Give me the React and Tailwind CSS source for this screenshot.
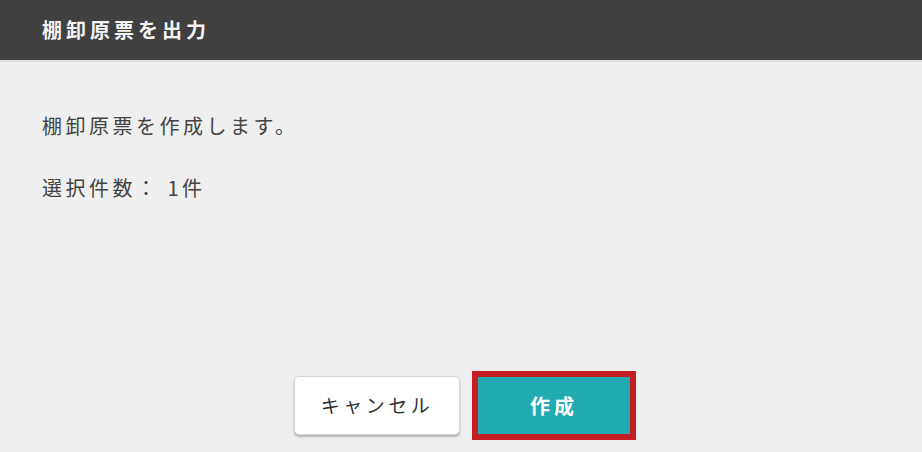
export default function App() {
  const font = { fontFamily: '"Noto Sans CJK JP", "Noto Sans", sans-serif' };
  return (
    <div style={font} className="w-[922px] h-[452px] bg-[#efefef] flex flex-col overflow-hidden">
      {/* Header */}
      <div className="h-[62px] bg-[#404040] flex items-center px-[42px] border-b-2 border-[#dcdcdc]">
        <h1 className="text-[20px] font-bold text-[#f4f4f4] tracking-[4px]">棚卸原票を出力</h1>
      </div>

      {/* Body */}
      <div className="flex-1 px-[42px] pt-[50px] text-[#444] text-[20px] tracking-[3.5px]">
        <p className="leading-[28px]">棚卸原票を作成します。</p>
        <p className="leading-[28px] mt-[34px]">選択件数： 1件</p>
      </div>

      {/* Footer */}
      <div className="flex justify-center items-center gap-[12px] pb-[12px] pl-[8px]">
        <button className="w-[166px] h-[59px] bg-white rounded-[5px] border border-[#d4d4d4] shadow-[0_2px_2px_rgba(0,0,0,0.25)] text-[19px] text-[#333] tracking-[3.5px]">
          キャンセル
        </button>
        <div className="border-[6px] border-[#c41e24]">
          <button className="w-[152px] h-[57px] bg-[#21aab0] text-white text-[20px] font-bold tracking-[4px]">
            作成
          </button>
        </div>
      </div>
    </div>
  );
}
